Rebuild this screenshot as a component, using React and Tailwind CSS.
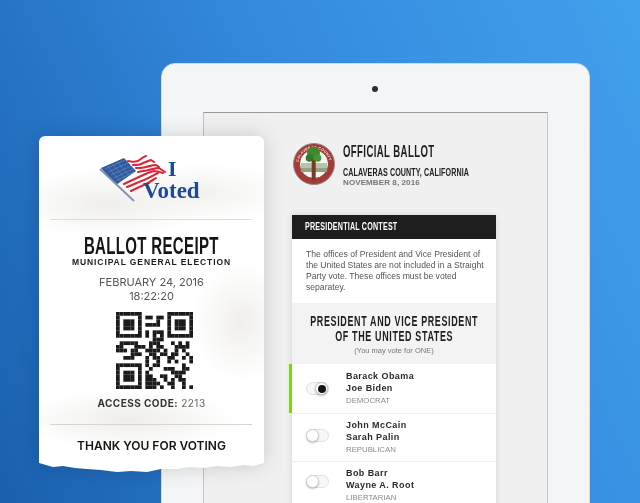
import React from "react";

const arial = "font-['Liberation_Sans',sans-serif]";
const inter = "font-['Inter',sans-serif]";

const qrRows = [
  "111111100000001111111",
  "100000101101101000001",
  "101110100001001011101",
  "101110101111001011101",
  "101110100000001011101",
  "100000101011101000001",
  "111111101010101111111",
  "000000000011100000000",
  "011111000111000101010",
  "110001110101100011110",
  "111011001111010010100",
  "000011100110110110010",
  "001110001011001100101",
  "000000001001001010001",
  "111111101011000000100",
  "100000100100011100110",
  "101110101000000111100",
  "101110101100110011000",
  "101110101110010101100",
  "100000101111001100100",
  "111111101110100100101",
];

const candidates = [
  { first: "Barack Obama", second: "Joe Biden", party: "DEMOCRAT", selected: true, height: "h-[50px]", shift: "mt-0" },
  { first: "John McCain", second: "Sarah Palin", party: "REPUBLICAN", height: "h-[48px]", shift: "-mt-[4px]" },
  { first: "Bob Barr", second: "Wayne A. Root", party: "LIBERTARIAN", height: "h-[48px]", shift: "-mt-[8px]" },
];

const QrCode = () => (
  <svg viewBox="0 0 21 21" className="w-[77px] h-[77px] block" fill="#1b1b1b">
    {qrRows.map((row, y) =>
      row.split("").map((bit, x) => (bit === "1" ? <rect key={`${x}-${y}`} x={x} y={y} width="1.02" height="1.02" /> : null))
    )}
  </svg>
);

const FlagLogo = () => (
  <svg viewBox="0 0 72 56" className="w-[72px] h-[56px] block">
    <g fill="none" stroke="#d8263a" strokeWidth="2.1" strokeLinecap="round" strokeLinejoin="round">
      <path d="M30 8 C34 9 37 9 40 8 C43 6 45 4 48 3" />
      <path d="M35 12 C38 12 41 12 43 11 C47 9 50 8 53 7 L56 9" />
      <path d="M38 15 C41 15 45 15 48 14 C52 13 55 12 58 12 L61 14" />
      <path d="M40 19 C44 18 47 18 51 17 C55 16 58 15 61 15 L67 19" />
      <path d="M26 31 C32 28 37 26 43 23 C47 21 52 19 56 18 C59 18 62 19 65 20" />
      <path d="M29 34 C35 32 40 29 46 27 C51 25 56 22 60 20" />
      <path d="M33 38 C39 35 44 33 50 30 C53 28 55 27 58 25" />
    </g>
    <path d="M3 15 L26 5 L38 18 L18 32 Z" fill="#2f5a9e" />
    <path d="M7 16 L27 7 M10 19 L30 10 M13 22 L33 13 M16 25 L35 16 M18 28 L36 19" stroke="#7f9ccf" strokeWidth="0.5" />
    <path d="M9 13 L23 29 M14 11 L28 26 M19 9 L32 23" stroke="#7f9ccf" strokeWidth="0.4" />
    <path d="M2 16 L36 48" stroke="#7f93b5" strokeWidth="1.8" />
  </svg>
);

const Seal = () => (
  <svg viewBox="0 0 42 42" className="w-[42px] h-[42px] block shrink-0">
    <defs>
      <path id="sealTop" d="M5.5 21 A15.5 15.5 0 0 1 36.5 21" />
    </defs>
    <circle cx="21" cy="21" r="20.5" fill="#a63a38" stroke="#8d8d86" strokeWidth="1" />
    <text fontSize="3.6" fontWeight="700" fill="#f3e9e2" fontFamily="Liberation Sans, sans-serif" letterSpacing="0.3">
      <textPath href="#sealTop" startOffset="2">CALAVERAS COUNTY</textPath>
    </text>
    <circle cx="21" cy="21" r="14.5" fill="#f4f4f0" stroke="#7c2a28" strokeWidth="0.8" />
    <rect x="8" y="20" width="26" height="6" fill="#b9c2ae" />
    <rect x="8" y="25" width="26" height="4" fill="#8fa685" />
    <rect x="18.7" y="14" width="4" height="23" fill="#7a3d22" />
    <circle cx="20.5" cy="10" r="6.5" fill="#3f8a2f" />
    <circle cx="16.5" cy="15" r="3.8" fill="#2f7a28" />
    <circle cx="24.5" cy="15" r="3.8" fill="#4a9436" />
  </svg>
);

const Toggle = ({ on, shift }) => (
  <div className={`relative w-[23px] h-[13px] rounded-full border border-[#e0e0e0] bg-[#f7f7f7] shrink-0 ml-[1px] ${shift}`}>
    <div
      className={
        on
          ? "absolute right-0 top-[-1px] w-[13px] h-[13px] rounded-full bg-white border border-[#c4c4c4] flex items-center justify-center shadow-[0_1px_2px_rgba(0,0,0,.25)]"
          : "absolute left-[-1px] top-[-1px] w-[13px] h-[13px] rounded-full bg-white border border-[#cfcfcf] shadow-[0_1px_2px_rgba(0,0,0,.25)]"
      }
    >
      {on && <div className="w-[8px] h-[8px] rounded-full bg-[#151515]" />}
    </div>
  </div>
);

const CandidateRow = ({ first, second, party, selected, height, shift }) => (
  <div className={`relative ${height} bg-white border-b border-[#eeeeee] flex items-center pl-[13px]`}>
    {selected && <div className="absolute left-[-3px] top-0 bottom-0 w-[3px] bg-[#7ed321]" />}
    <Toggle on={selected} shift={shift} />
    <div className={`ml-[17px] ${arial} text-[#2a2a2a]`}>
      <div className="text-[9px] leading-[12px] font-bold tracking-[0.42px]">{first}</div>
      <div className="text-[9px] leading-[12px] font-bold tracking-[0.42px]">{second}</div>
      <div className="text-[7.8px] leading-[13px] text-[#8a8a8a]">{party}</div>
    </div>
  </div>
);

const Ballot = () => (
  <div className="h-full bg-[#f0f0f0] border-t border-x border-t-[#9a9a9a] border-x-[#c4c4c4] pl-[88px]">
    <div className="flex items-start h-[42px] ml-[1px] mt-[30px]">
      <Seal />
      <div className="ml-[8px] -mt-[2px]">
        <div className={`${arial} font-bold text-[16.5px] leading-[20px] tracking-[0.7px] text-[#1e1e1e] whitespace-nowrap origin-left scale-x-[.58]`}>OFFICIAL BALLOT</div>
        <div className={`${arial} font-bold text-[10.5px] leading-[11px] mt-[6px] tracking-[0.15px] text-[#222222] whitespace-nowrap origin-left scale-x-[.68]`}>CALAVERAS COUNTY, CALIFORNIA</div>
        <div className={`${arial} font-bold text-[8px] leading-[10px] tracking-[0.1px] text-[#777777]`}>NOVEMBER 8, 2016</div>
      </div>
    </div>
    <div className="w-[204px] mt-[30px] shadow-[0_0_6px_rgba(0,0,0,.12)]">
      <div className={`h-[24px] bg-[#1e1e1e] flex items-center pl-[13px] ${arial} font-bold text-[10.5px] tracking-[0.3px] text-white`}>
        <span className="whitespace-nowrap origin-left scale-x-[.68]">PRESIDENTIAL CONTEST</span>
      </div>
      <div className={`h-[64px] bg-white pl-[14px] pt-[10px] ${arial} text-[8.6px] leading-[11px] text-[#555555] whitespace-nowrap`}>
        The offices of President and Vice President of
        <br />
        the United States are not included in a Straight
        <br />
        Party vote. These offices must be voted
        <br />
        separatey.
      </div>
      <div className="h-[61px] bg-[#f3f3f3] flex flex-col items-center pt-[11px]">
        <div className={`${arial} font-bold text-[14px] leading-[15px] tracking-[1px] text-[#1e1e1e] text-center whitespace-nowrap scale-x-[.64]`}>
          PRESIDENT AND VICE PRESIDENT
          <br />
          OF THE UNITED STATES
        </div>
        <div className={`${arial} text-[7.5px] leading-[10px] mt-[2px] text-[#777777]`}>(You may vote for ONE)</div>
      </div>
      {candidates.map((c) => (
        <CandidateRow key={c.first} {...c} />
      ))}
    </div>
  </div>
);

const Receipt = () => (
  <div className="absolute left-[39px] top-[136px] w-[225px] blur-[0.3px] drop-shadow-[0_0_10px_rgba(0,0,0,.16)]">
    <div className="[clip-path:polygon(0_0,225px_0,225px_327px,214px_330px,205px_329px,192px_331px,178px_330px,165px_332px,150px_331px,138px_333px,122px_333px,108px_336px,92px_335px,78px_336px,62px_334px,48px_333px,36px_332px,24px_330px,14px_331px,0_327px)]">
      <div className="h-[338px] rounded-t-md bg-white bg-[radial-gradient(ellipse_100px_34px_at_30%_20%,#efeeeb,transparent),radial-gradient(ellipse_90px_30px_at_72%_17%,#f2f1ee,transparent),radial-gradient(ellipse_50px_60px_at_90%_55%,#f0efec,transparent),radial-gradient(ellipse_110px_30px_at_40%_84%,#eeedea,transparent)] flex flex-col items-center">
        <div className="w-full h-[83px] flex justify-center pt-[19px] pl-[1px]">
          <div className="relative w-[104px] h-[52px]">
            <div className="absolute left-[-2px] top-[-2px]">
              <FlagLogo />
            </div>
            <div className="absolute left-[68px] top-[5px] font-['Liberation_Serif',serif] font-bold text-[22px] leading-[18px] text-[#1d4b93]">I</div>
            <div className="absolute left-[43px] top-[26px] font-['Liberation_Serif',serif] font-bold text-[23px] leading-[20px] text-[#1d4b93]">Voted</div>
          </div>
        </div>
        <div className="w-[202px] h-px bg-[#dcdcdc] self-start ml-[11px]" />
        <div className={`${arial} font-bold text-[23.5px] leading-[20px] mt-[16px] tracking-[0.5px] text-[#151515] whitespace-nowrap scale-x-[.64]`}>BALLOT RECEIPT</div>
        <div className={`${arial} font-bold text-[8.5px] leading-[10px] mt-[1px] tracking-[0.9px] text-[#1c1c1c]`}>MUNICIPAL GENERAL ELECTION</div>
        <div className={`${inter} text-[11px] leading-[14px] mt-[8px] text-[#555555] text-center`}>
          FEBRUARY 24, 2016
          <br />
          18:22:20
        </div>
        <div className="mt-[9px] ml-[5px]">
          <QrCode />
        </div>
        <div className={`${inter} text-[10px] leading-[12px] mt-[8px] tracking-[0.45px] text-[#333333]`}>
          <span className="font-bold">ACCESS CODE:</span> <span className="text-[#666666]">2213</span>
        </div>
        <div className="w-[202px] h-px bg-[#d6d5d2] mt-[15px] self-start ml-[11px]" />
        <div className={`${inter} font-semibold text-[12px] leading-[14px] mt-[14px] text-[#151515]`}>THANK YOU FOR VOTING</div>
      </div>
    </div>
  </div>
);

const App = () => (
  <div className="relative w-[640px] h-[503px] overflow-hidden bg-[linear-gradient(65deg,#1a5fae,#348ade_55%,#42a0ec)] pl-[161px] pt-[63px]">
    <div className="w-[429px] h-[460px] bg-[#f4f5f7] rounded-t-[14px] border border-[#d9d9d9] pt-[48px] px-[41px] blur-[0.3px]">
      <div className="relative">
        <div className="absolute left-[169px] top-[-26px] w-[6px] h-[6px] rounded-full bg-[#2c2f3a]" />
        <div className="h-[400px]">
          <Ballot />
        </div>
      </div>
    </div>
    <Receipt />
  </div>
);

export default App;
